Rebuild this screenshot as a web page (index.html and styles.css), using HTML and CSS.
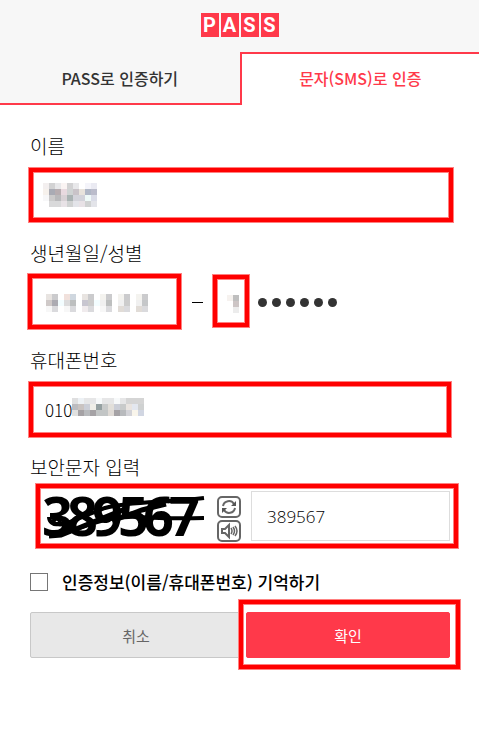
FILE: index.html
```html
<!DOCTYPE html>
<html lang="ko">
<head>
<meta charset="utf-8">
<meta name="viewport" content="width=device-width, initial-scale=1">
<title>PASS</title>
<link rel="stylesheet" href="styles.css">
</head>
<body>
<header class="header">
  <h1 class="logo"><span>P</span><span>A</span><span>S</span><span>S</span></h1>
</header>
<nav class="tabs">
  <a class="tab" href="#pass">PASS로 인증하기</a>
  <a class="tab tab-active" href="#sms">문자(SMS)로 인증</a>
</nav>
<form class="form">
  <div class="group">
    <label class="label" for="name">이름</label>
    <div class="field">
      <input class="input" id="name" type="text">
      <svg class="mosaic mosaic-name" width="54" height="24" shape-rendering="crispEdges">
        <path fill="#f3efef" d="M0 0h6v6H0z"/><path fill="#d2d2d3" d="M6 0h6v6H6zM24 0h6v6h-6z"/><path fill="#e8e8ea" d="M12 0h6v6h-6zM30 0h6v6h-6z"/><path fill="#faf4f3" d="M18 0h6v6h-6z"/><path fill="#f4f4fa" d="M42 0h6v6h-6z"/><path fill="#eaeaf2" d="M48 0h6v6h-6z"/>
        <path fill="#f6f1ec" d="M0 6h6v6H0z"/><path fill="#a9abb4" d="M6 6h6v6H6z"/><path fill="#b7adb0" d="M12 6h6v6h-6z"/><path fill="#e8d9df" d="M18 6h6v6h-6z"/><path fill="#cfd3d3" d="M24 6h6v6h-6z"/><path fill="#c9c3c8" d="M30 6h6v6h-6z"/><path fill="#e8e3dc" d="M36 6h6v6h-6z"/><path fill="#b0b7c6" d="M42 6h6v6h-6z"/><path fill="#bbbccb" d="M48 6h6v6h-6z"/>
        <path fill="#f7f7f8" d="M0 12h6v6H0z"/><path fill="#cbcaca" d="M6 12h6v6H6z"/><path fill="#b9b9bb" d="M12 12h6v6h-6z"/><path fill="#d8d1d5" d="M18 12h6v6h-6z"/><path fill="#aab3b3" d="M24 12h6v6h-6z"/><path fill="#d3d3da" d="M30 12h12v6H30z"/><path fill="#effaf8" d="M42 12h6v6h-6z"/><path fill="#dadce7" d="M48 12h6v6h-6z"/>
        <path fill="#d9d9da" d="M6 18h12v6H6z"/><path fill="#e8e2e6" d="M18 18h6v6h-6zM36 18h6v6h-6z"/><path fill="#d0d2d2" d="M24 18h6v6h-6zM42 18h6v6h-6z"/><path fill="#e3e4e9" d="M30 18h6v6h-6zM48 18h6v6h-6z"/>
      </svg>
      <span class="mark mark-name"></span>
    </div>
  </div>
  <div class="group">
    <label class="label" for="birth">생년월일/성별</label>
    <div class="birth-row">
      <div class="field birth">
        <input class="input" id="birth" type="text">
        <svg class="mosaic mosaic-birth" width="102" height="18" shape-rendering="crispEdges">
          <path fill="#e8e4e1" d="M0 0h6v6H0zM36 0h6v6h-6z"/><path fill="#cbcbcd" d="M6 0h6v6H6zM42 0h6v6h-6zM60 0h6v6h-6zM78 0h6v6h-6zM96 0h6v6h-6z"/><path fill="#f1e1dc" d="M18 0h6v6h-6z"/><path fill="#cfd7df" d="M24 0h6v6h-6z"/><path fill="#f4f3ef" d="M54 0h6v6h-6zM72 0h6v6h-6zM90 0h6v6h-6z"/>
          <path fill="#cfc9c8" d="M0 6h6v6H0z"/><path fill="#acabb2" d="M6 6h6v6H6z"/><path fill="#f3fdff" d="M12 6h6v6h-6zM48 6h6v6h-6z"/><path fill="#dcdcdd" d="M18 6h6v6h-6z"/><path fill="#bdbfbf" d="M24 6h6v6h-6zM60 6h6v6h-6z"/><path fill="#c8c6d0" d="M36 6h6v6h-6z"/><path fill="#cccccc" d="M42 6h6v6h-6zM78 6h6v6h-6z"/><path fill="#f0f0f0" d="M54 6h6v6h-6zM72 6h6v6h-6zM90 6h6v6h-6z"/><path fill="#c5c7c9" d="M96 6h6v6h-6z"/>
          <path fill="#f7f7f7" d="M0 12h6v6H0zM18 12h6v6h-6zM54 12h6v6h-6z"/><path fill="#dadadd" d="M6 12h6v6H6zM24 12h6v6h-6zM42 12h6v6h-6zM60 12h6v6h-6zM78 12h6v6h-6zM96 12h6v6h-6z"/><path fill="#f0ebed" d="M36 12h6v6h-6z"/><path fill="#e1dcd7" d="M72 12h6v6h-6zM90 12h6v6h-6z"/>
        </svg>
        <span class="mark mark-birth"></span>
      </div>
      <span class="dash"></span>
      <div class="field gender">
        <input class="input" type="text" aria-label="성별">
        <svg class="mosaic mosaic-gender" width="12" height="18" shape-rendering="crispEdges">
          <path fill="#f6f2ef" d="M0 0h6v6H0z"/><path fill="#bfbfbf" d="M6 0h6v6H6z"/><path fill="#cdc5c5" d="M6 6h6v6H6z"/><path fill="#ececec" d="M6 12h6v6H6z"/>
        </svg>
        <span class="mark mark-gender"></span>
      </div>
      <div class="dots"><i></i><i></i><i></i><i></i><i></i><i></i></div>
    </div>
  </div>
  <div class="group">
    <label class="label" for="phone">휴대폰번호</label>
    <div class="field">
      <input class="input" id="phone" type="text" value="010">
      <svg class="mosaic mosaic-phone" width="72" height="18" shape-rendering="crispEdges">
        <path fill="#dfdfe0" d="M0 0h6v6H0z"/><path fill="#edf1f5" d="M6 0h6v6H6z"/><path fill="#e6e6e7" d="M12 0h12v6H12zM30 0h12v6H30zM48 0h6v6h-6z"/><path fill="#f7f9fa" d="M24 0h6v6h-6zM42 0h6v6h-6z"/><path fill="#d5d5d5" d="M54 0h18v6H54z"/>
        <path fill="#bcbcc0" d="M0 6h6v6H0z"/><path fill="#c9c3c1" d="M6 6h6v6H6z"/><path fill="#cbced7" d="M12 6h6v6h-6zM42 6h6v6h-6z"/><path fill="#efeee8" d="M18 6h6v6h-6z"/><path fill="#95a0a1" d="M24 6h6v6h-6z"/><path fill="#c8caca" d="M30 6h6v6h-6zM48 6h6v6h-6z"/><path fill="#e2dfda" d="M36 6h6v6h-6z"/><path fill="#e9e4e0" d="M54 6h6v6h-6z"/><path fill="#e3e7ef" d="M60 6h6v6h-6z"/><path fill="#cfd1d1" d="M66 6h6v6h-6z"/>
        <path fill="#e0e0df" d="M0 12h6v6H0z"/><path fill="#a5a2a5" d="M6 12h6v6H6zM18 12h6v6h-6zM42 12h6v6h-6z"/><path fill="#b8babd" d="M12 12h6v6h-6zM48 12h6v6h-6z"/><path fill="#c2c5c5" d="M24 12h12v6H24z"/><path fill="#dfdad5" d="M36 12h6v6h-6z"/><path fill="#d3d3d8" d="M54 12h6v6h-6z"/><path fill="#f9f5eb" d="M60 12h6v6h-6z"/><path fill="#d1d6e2" d="M66 12h6v6h-6z"/>
      </svg>
      <span class="mark mark-phone"></span>
    </div>
  </div>
  <div class="group">
    <label class="label" for="captcha">보안문자 입력</label>
    <div class="field captcha-row">
      <svg class="captcha" width="164" height="50" viewBox="0 0 164 50">
        <text class="captcha-text" x="0 25 50 76 101 127" y="45">389567</text>
        <g fill="none" stroke="#000">
          <path stroke-width="4" d="M7 26C7 31 12 34 16 33c5-2-1-8-4-4s6 6 13 3l38-15c25-7 60-5 99-10"/>
          <path stroke-width="4" d="M7 45l12-2c25-7 45-19 79-17 20 1 30 2 64 1"/>
          <path stroke-width="5" d="M7 45l12-1 20-8 44-18M70 30l30-11 24-6"/>
        </g>
      </svg>
      <div class="tools">
        <button class="tool" type="button" aria-label="새로고침">
          <svg width="18" height="18" viewBox="0 0 18 18"><g fill="none" stroke="#666" stroke-width="2"><path d="M3 8a6 6 0 0 1 11-2M15 10a6 6 0 0 1-11 2"/></g><path fill="#555" d="M16 3v5h-5zM2 15v-5h5z"/></svg>
        </button>
        <button class="tool" type="button" aria-label="음성듣기">
          <svg width="18" height="18" viewBox="0 0 18 18"><g fill="none" stroke="#666"><path stroke-width="2" d="M2 7h3l4-4v12l-4-4H2z"/><path stroke-width="1.5" d="M11 6q2 3 0 6M13 5q3 4 0 8M15 4q4 5 0 10"/></g></svg>
        </button>
      </div>
      <input class="input captcha-input" id="captcha" type="text" value="389567">
      <span class="mark mark-captcha"></span>
    </div>
  </div>
  <div class="remember">
    <input class="check" id="remember" type="checkbox">
    <label for="remember">인증정보(이름/휴대폰번호) 기억하기</label>
  </div>
  <div class="actions">
    <button class="btn btn-cancel" type="button">취소</button>
    <div class="confirm">
      <button class="btn btn-confirm" type="submit">확인</button>
      <span class="mark mark-confirm"></span>
    </div>
  </div>
</form>
</body>
</html>
```
FILE: styles.css
```css
* { box-sizing: border-box; }

body {
  margin: 0;
  background: #fff;
  color: #000;
  font-family: "Noto Sans CJK KR", "Noto Sans", sans-serif;
  font-size: 16px;
}

button, input { font-family: inherit; }

.header {
  display: flex;
  justify-content: center;
  height: 52px;
  padding-top: 13px;
  background: #f7f7f7;
}

.logo {
  display: flex;
  gap: 2px;
  margin: 0;
  font: bold 20px/24px Roboto, "Liberation Sans", sans-serif;
}

.logo span {
  width: 18px;
  height: 24px;
  background: #ff394a;
  color: #fff;
  text-align: center;
}

/* Tabs */
.tabs { display: grid; grid-template-columns: 1fr 1fr; }

.tab {
  height: 53px;
  border-bottom: 2px solid #ff394a;
  background: #f7f7f7;
  color: #333;
  font-weight: 500;
  line-height: 53px;
  text-align: center;
  text-decoration: none;
}

.tab-active {
  border: solid #ff394a;
  border-width: 2px 0 0 2px;
  background: #fff;
  color: #ff394a;
  line-height: 49px;
}

/* Form */
.form { padding: 24px 29px 70px 30px; }
.group { margin-bottom: 15px; }

.label {
  display: block;
  margin-bottom: 7px;
  font-size: 19px;
  font-weight: 300;
  line-height: 34px;
}

.field { position: relative; height: 50px; }

.input {
  width: 100%;
  height: 50px;
  padding: 0 15px;
  border: 0;
  background: #fff;
  color: #000;
  font-size: 17px;
  font-weight: 300;
  outline: none;
}

.group + .group { margin-top: 16px; }

.birth-row { display: flex; align-items: center; }
.birth { width: 150px; }
.dash { width: 11px; height: 1px; margin: 0 11px 0 12px; background: #000; }
.gender { width: 32px; }
.dots { display: flex; gap: 5px; margin-left: 12px; }
.dots i { width: 9px; height: 9px; border-radius: 50%; background: #333; }

.mosaic { position: absolute; }
.mosaic-name { left: 13px; top: 13px; }
.mosaic-birth { left: 16px; top: 17px; }
.mosaic-gender { right: 7px; top: 18px; }
.mosaic-phone { left: 42px; top: 14px; }

/* Highlight frames drawn over the controls */
.mark {
  position: absolute;
  border: 4px solid #f00;
  box-shadow: 0 0 0 1px #ff8080, inset 0 0 0 1px #ff8080;
  pointer-events: none;
}

.mark-name { inset: -2px -3px -2px -1px; }
.mark-birth { inset: -3px -1px -2px -2px; }
.mark-gender { inset: -2px -3px 0 -1px; }
.mark-phone { inset: -2px -1px -3px; }
.mark-captcha { inset: -7px -8px -7px 6px; }
.mark-confirm { inset: -12px -10px -11px -7px; }

/* Captcha */
.captcha-row { display: flex; }
.captcha { flex: none; margin-left: 12px; overflow: visible; }
.captcha-text { font: bold 54px "Open Sans", sans-serif; }

.tools {
  display: flex;
  flex-direction: column;
  gap: 2px;
  margin: 5px 10px 0 11px;
}

.tool {
  display: flex;
  align-items: center;
  justify-content: center;
  width: 24px;
  height: 24px;
  padding: 0;
  border: 2px solid #666;
  border-radius: 5px;
  background: #fff;
}

.captcha-input {
  flex: 1;
  min-width: 0;
  border: 1px solid #ddd;
  font-family: "Open Sans", "Noto Sans", sans-serif;
}

.remember {
  display: flex;
  align-items: center;
  gap: 14px;
  margin-top: 29px;
  font-size: 17px;
  font-weight: 500;
  line-height: 24px;
}

.check {
  appearance: none;
  width: 18px;
  height: 18px;
  margin: 0;
  border: 1px solid #767676;
  background: #fff;
}

.actions {
  display: grid;
  grid-template-columns: 53fr 51fr;
  gap: 4px;
  margin-top: 18px;
}

.btn {
  width: 100%;
  height: 46px;
  border: 1px solid #c8c8c8;
  border-radius: 2px;
  font-size: 15px;
  font-weight: 400;
}

.btn-cancel { background: #e8e8e8; color: #666; }
.confirm { position: relative; }
.btn-confirm { border-color: #ff394a; background: #ff394a; color: #fff; }
```
